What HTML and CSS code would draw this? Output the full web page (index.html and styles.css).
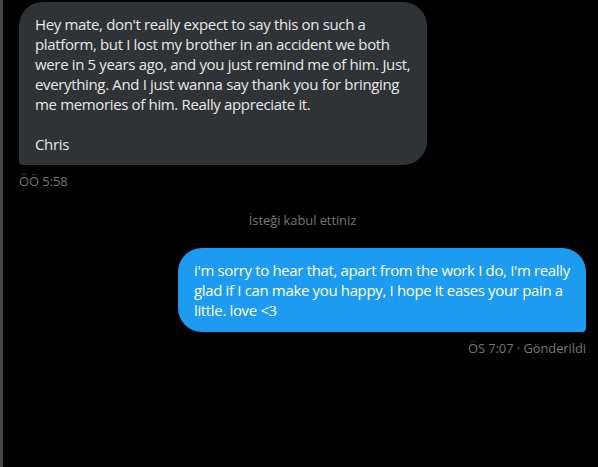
FILE: index.html
```html
<!DOCTYPE html>
<html>
<head>
<meta charset="utf-8">
<link rel="stylesheet" href="styles.css">
</head>
<body>
<div class="pane">
  <div class="msg in">
    <div class="bubble gray">Hey mate, don't really expect to say this on such a platform, but I lost my brother in an accident we both were in 5 years ago, and you just remind me of him. Just, everything. And I just wanna say thank you for bringing me memories of him. Really appreciate it.<br><br>Chris</div>
    <div class="meta">ÖÖ 5:58</div>
  </div>
  <div class="notice">İsteği kabul ettiniz</div>
  <div class="msg out">
    <div class="bubble blue">i'm sorry to hear that, apart from the work I do, I'm really glad if I can make you happy, I hope it eases your pain a little. love &lt;3</div>
    <div class="meta">ÖS 7:07 · Gönderildi</div>
  </div>
</div>
</body>
</html>
```

FILE: styles.css
```css
html, body {
  margin: 0;
  padding: 0;
  background: #000;
  height: 100%;
}
.pane {
  box-sizing: border-box;
  height: 467px;
  border-left: 3px solid #454545;
  padding: 2px 12px 0 16px;
  font-family: "Open Sans", "Noto Sans", sans-serif;
  display: flex;
  flex-direction: column;
}
.msg {
  display: flex;
  flex-direction: column;
}
.msg.in { align-items: flex-start; }
.msg.out { align-items: flex-end; }
.bubble {
  box-sizing: border-box;
  width: 408px;
  padding: 12px 16px 11px 16px;
  font-size: 15px;
  line-height: 20px;
  letter-spacing: -0.35px;
  border-radius: 24px;
}
.gray {
  background: #2f3336;
  color: #e7e9ea;
  border-bottom-left-radius: 4px;
}
.blue {
  background: #1d9bf0;
  color: #fff;
  padding: 12px 16px;
  border-bottom-right-radius: 4px;
}
.meta {
  font-size: 13px;
  line-height: 16px;
  color: #71767b;
  margin-top: 8px;
  letter-spacing: -0.1px;
}
.notice {
  text-align: center;
  font-size: 13px;
  line-height: 16px;
  color: #71767b;
  margin: 23px 0 20px;
  letter-spacing: -0.1px;
}
```
